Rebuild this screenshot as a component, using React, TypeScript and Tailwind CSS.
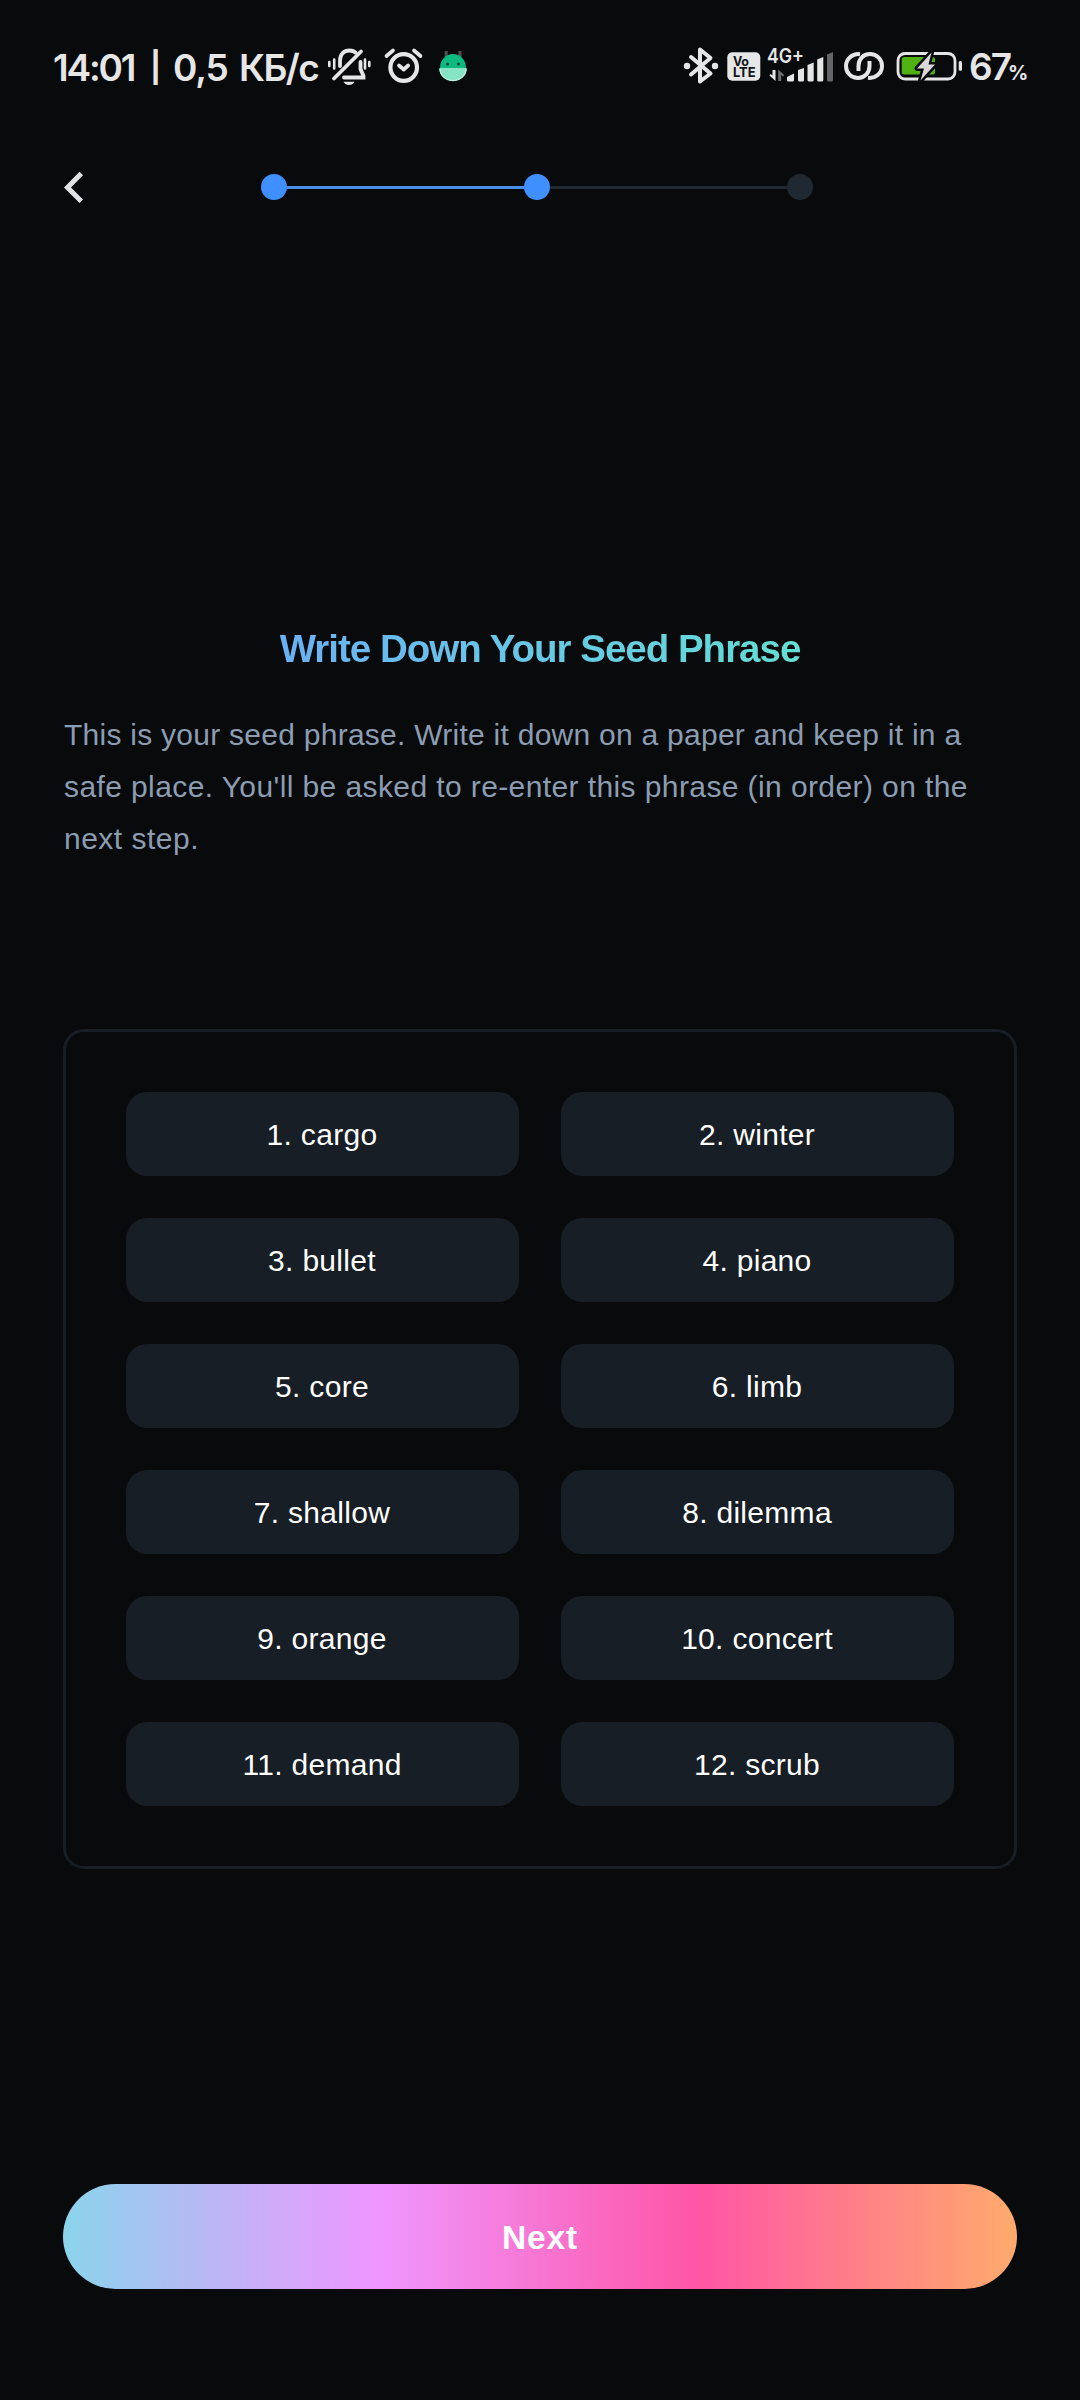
const words = [
  'cargo', 'winter', 'bullet', 'piano', 'core', 'limb',
  'shallow', 'dilemma', 'orange', 'concert', 'demand', 'scrub',
];

function StatusBar() {
  return (
    <header className="flex h-[132px] items-center pl-[53px] text-[#e6e6e6]">
      <div className="flex w-[273px] items-center whitespace-nowrap pt-[3px] font-['Inter',sans-serif] text-[37px] font-semibold leading-[44px]">
        <span className="w-[97px] tracking-[-2.2px]">14:01</span>
        <span className="flex w-[23px] overflow-visible pb-[2px] text-[30px] font-bold">|</span>
        <span className="w-[66px] tracking-[-1.2px]">0,5</span>
        <span className="tracking-[-1.6px]">КБ/с</span>
      </div>
      <svg className="h-[44px] w-[48px] shrink-0" viewBox="326 44 48 44" fill="none" stroke="currentColor" strokeWidth="3.800" strokeLinecap="round">
        <path d="M340 66V61C340 54 344 50.500 349.500 50.500C352 50.500 354 51.200 355.500 52.500M360.500 62V69L363.500 76V77.500H344" />
        <path d="M361 51.500L334 78.500" />
        <path d="M329.300 62V66M334.200 59.500V68.500M365 59.500V68.500M369.300 62V66" strokeWidth="2.600" />
        <path d="M343.500 81.700H354.500Q352.500 85 349 85T343.500 81.700Z" fill="currentColor" stroke="none" />
      </svg>
      <svg className="ml-[8px] h-[44px] w-[42px] shrink-0" viewBox="382 44 42 44" fill="none" stroke="currentColor" strokeWidth="4.200" strokeLinecap="round" strokeLinejoin="round">
        <circle cx="403.700" cy="67.500" r="13.300" />
        <path d="M399 65.500L403.700 69.500L408.200 65.500" strokeWidth="3.700" />
        <path d="M386.500 56L393 50.500M414 50.500L420.500 56" strokeWidth="3.700" />
      </svg>
      <svg className="ml-[12px] h-[44px] w-[34px] shrink-0" viewBox="436 44 34 44">
        <path d="M446.200 51V57M459.900 51V57" stroke="#4b4e50" strokeWidth="3.200" />
        <path d="M440 68A13 14 0 0 1 466 68Z" fill="#0cba80" />
        <path d="M439.300 68H466.700A13.700 13 0 0 1 439.300 68Z" fill="#86e3c3" />
        <path d="M440 69A13 11.500 0 0 0 466 69" fill="none" stroke="#b9f5df" strokeWidth="1.300" />
        <circle cx="447.500" cy="64" r="1.500" fill="#12443a" />
        <circle cx="458.500" cy="64" r="1.500" fill="#12443a" />
      </svg>
      <svg className="ml-[212px] h-[44px] w-[40px] shrink-0" viewBox="682 44 40 44" fill="none" stroke="currentColor" strokeWidth="4" strokeLinecap="round" strokeLinejoin="round">
        <path d="M691 57L710.500 73.500L700 81.500V49.500L710.500 58L691 74.500" />
        <circle cx="687" cy="66" r="3.200" fill="currentColor" stroke="none" />
        <circle cx="715" cy="66" r="3.200" fill="currentColor" stroke="none" />
      </svg>
      <svg className="h-[44px] w-[42px] shrink-0" viewBox="722 44 42 44">
        <rect x="727.300" y="52.200" width="33" height="28.500" rx="5" fill="currentColor" />
        <g fill="#111314" fontFamily="Inter, sans-serif" fontWeight="700">
          <text x="733" y="65.700" fontSize="12.500" textLength="16">Vo</text>
          <text x="733" y="77.200" fontSize="13.500" textLength="22.500" lengthAdjust="spacingAndGlyphs">LTE</text>
        </g>
      </svg>
      <svg className="h-[44px] w-[74px] shrink-0" viewBox="764 44 74 44" fill="currentColor">
        <text x="767" y="63" fontFamily="Inter, sans-serif" fontWeight="600" fontSize="20" textLength="37" lengthAdjust="spacingAndGlyphs">4G+</text>
        <path d="M772.500 70H775.500V81L769.500 75.500L770.500 74L772.500 75.500Z" />
        <path d="M778.200 81V69.500L784.200 75L783.200 76.500L781.200 75V81Z" fill="#6c6d6e" />
        <path d="M787 77L794 73.500V80Q794 81.500 792.500 81.500H788.500Q787 81.500 787 80Z" />
        <path d="M798 70L804 68V80Q804 81.500 802.500 81.500H799.500Q798 81.500 798 80Z" />
        <path d="M807.500 65L813.700 62.500V80Q813.700 81.500 812.200 81.500H809Q807.500 81.500 807.500 80Z" />
        <path d="M817.200 59.500L823.300 57V80Q823.300 81.500 821.800 81.500H818.700Q817.200 81.500 817.200 80Z" />
        <path d="M827 54.500L833 52V80Q833 81.500 831.500 81.500H828.500Q827 81.500 827 80Z" fill="#646566" />
      </svg>
      <svg className="ml-[4px] h-[44px] w-[46px] shrink-0" viewBox="842 44 46 44" fill="none" stroke="currentColor" strokeWidth="4">
        <path d="M860 54.200C852 53.300 846 59 846 66C846 73 851.500 78 858 78C865 78 869.500 72.500 869.500 66V61" />
        <path d="M868 77.800C876 78.700 882 73 882 66C882 59 876.500 54 870 54C863 54 858.500 59.500 858.500 66V71" />
      </svg>
      <svg className="ml-[6px] h-[44px] w-[70px] shrink-0" viewBox="894 44 70 44">
        <rect x="898" y="53.500" width="57" height="25.500" rx="7" fill="none" stroke="currentColor" strokeWidth="2.800" />
        <rect x="901.700" y="57" width="33.300" height="17.500" rx="2.500" fill="#4fb212" />
        <rect x="958.700" y="61" width="3.300" height="9.800" rx="1.500" fill="currentColor" />
        <path d="M931.500 52.500L917 68.500H924L920.500 80.500L935 64.500H928.500Z" fill="#d8d8d8" stroke="#080a0c" strokeWidth="5" strokeLinejoin="round" />
        <path d="M931.500 52.500L917 68.500H924L920.500 80.500L935 64.500H928.500Z" fill="#d8d8d8" />
      </svg>
      <div className="ml-[5px] flex items-baseline whitespace-nowrap pt-[8px] font-['Inter',sans-serif] font-semibold leading-[44px]">
        <span className="w-[39px] text-[37px] tracking-[-2px]">67</span>
        <span className="text-[20px] font-bold">%</span>
      </div>
    </header>
  );
}

function Progress() {
  return (
    <nav className="flex h-[110px] items-center pl-[63px]">
      <button aria-label="Back" className="h-[36px] w-[24px] text-[#e1e1e6]">
        <svg className="h-[36px] w-[24px]" viewBox="63 169 24 36" fill="none" stroke="currentColor" strokeWidth="5">
          <path d="M81.300 173.600L67.500 187.400L81.300 201.200" />
        </svg>
      </button>
      <div className="ml-[174px] flex items-center">
        <span className="size-[26px] rounded-full bg-[#408fff]" />
        <span className="mt-px h-[3px] w-[237px] bg-[#4a8fe7]" />
        <span className="size-[26px] rounded-full bg-[#408fff]" />
        <span className="mt-px h-[3px] w-[237px] bg-[#202831]" />
        <span className="size-[26px] rounded-full bg-[#202831]" />
      </div>
    </nav>
  );
}

export default function App() {
  return (
    <div className="flex h-[2400px] w-[1080px] flex-col overflow-hidden bg-[#080a0c] font-['Liberation_Sans',Arial,sans-serif]">
      <StatusBar />
      <Progress />
      <main className="flex flex-col px-[63px] pt-[385px]">
        <h1 className="self-center whitespace-nowrap bg-linear-to-r from-[#6ab1f4] to-[#64ded4] bg-clip-text text-[38.5px] font-bold leading-[44px] tracking-[-1px] text-transparent">
          Write Down Your Seed Phrase
        </h1>
        <p className="ml-px mt-[38px] whitespace-nowrap text-[30px] leading-[52px] text-[#8c9db2]">
          <span className="block tracking-[0.26px]">This is your seed phrase. Write it down on a paper and keep it in a</span>
          <span className="block tracking-[0.4px]">safe place. You'll be asked to re-enter this phrase (in order) on the</span>
          <span className="block tracking-[0.5px]">next step.</span>
        </p>
        <ol className="mt-[164px] grid grid-cols-2 gap-[42px] rounded-[21px] border-[3px] border-[#181e25] p-[60px]">
          {words.map((word, i) => (
            <li key={word} className="flex h-[84px] items-center justify-center rounded-[21px] bg-[#181e25] pr-px pt-px text-[30px] leading-[40px] tracking-[0.3px] text-white">
              {i + 1}. {word}
            </li>
          ))}
        </ol>
        <button className="mt-[315px] h-[105px] rounded-full bg-[linear-gradient(90deg,#8bd4ec_0%,#ef96ff_33.3%,#ff55a5_66.6%,#ffab6c_100%)] pt-[2px] text-[33.5px] font-bold leading-[40px] tracking-[0.8px] text-white">
          Next
        </button>
      </main>
    </div>
  );
}
